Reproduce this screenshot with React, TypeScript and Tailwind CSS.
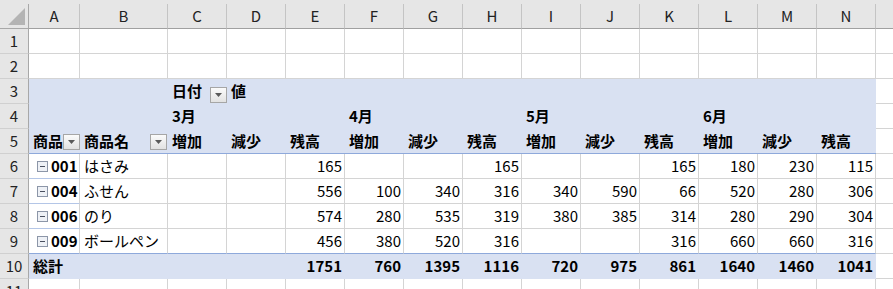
import React from 'react'

const letters = ['A', 'B', 'C', 'D', 'E', 'F', 'G', 'H', 'I', 'J', 'K', 'L', 'M', 'N']
const kinds = ['増加', '減少', '残高']
const months = ['3月', '', '', '4月', '', '', '5月', '', '', '6月', '', '']

type Item = { code: string; name: string; values: (number | null)[] }

const items: Item[] = [
  { code: '001', name: 'はさみ', values: [null, null, 165, null, null, 165, null, null, 165, 180, 230, 115] },
  { code: '004', name: 'ふせん', values: [null, null, 556, 100, 340, 316, 340, 590, 66, 520, 280, 306] },
  { code: '006', name: 'のり', values: [null, null, 574, 280, 535, 319, 380, 385, 314, 280, 290, 304] },
  { code: '009', name: 'ボールペン', values: [null, null, 456, 380, 520, 316, null, null, 316, 660, 660, 316] },
]

const totals = [null, null, 1751, 760, 1395, 1116, 720, 975, 861, 1640, 1460, 1041]

const FilterButton = () => (
  <span className="flex h-4 w-[17px] shrink-0 items-center justify-center border border-[#a6a6a6] bg-linear-to-b from-[#fbfbfb] to-[#e2e2e2]">
    <svg width="7" height="4" viewBox="0 0 7 4">
      <path d="M0 0h7L3.5 4z" fill="#5a5a5a" />
    </svg>
  </span>
)

const MinusBox = () => (
  <span className="flex h-[11px] w-[11px] shrink-0 items-center justify-center border border-[#8c96a8] bg-[#eef1f6]">
    <span className="h-px w-[5px] bg-[#4a5060]" />
  </span>
)

const RowHead = ({ n }: { n: number }) => (
  <div className="border-r border-b border-r-[#a8a8a8] border-b-[#d0d0d0] bg-[#e6e6e6] text-center leading-6 text-[#222]">
    {n}
  </div>
)

const Fill = ({ children, last }: { children?: React.ReactNode; last?: boolean }) => (
  <div className={last ? 'border-b border-b-[#8ea9db] bg-[#d9e1f2] pl-1 leading-6 font-bold' : 'bg-[#d9e1f2] pl-1 leading-6 font-bold'}>
    {children}
  </div>
)

const Blank = () => <div className="border-b border-b-[#d4d4d4] bg-white" />

const Num = ({ v, edge }: { v: number | null; edge?: boolean }) => (
  <div
    className={
      edge
        ? 'border-r border-b border-r-[#d4d4d4] border-b-[#8ea9db] bg-white pr-[2px] text-right leading-6'
        : 'border-r border-b border-[#d4d4d4] bg-white pr-[2px] text-right leading-6'
    }
  >
    {v ?? ''}
  </div>
)

export default function App() {
  return (
    <div className="h-[289px] w-[893px] overflow-hidden bg-white font-['Noto_Sans_CJK_JP',sans-serif] text-[15px] text-black">
      <div className="h-1 bg-[#e6e6e6]" />
      <div className="grid grid-cols-[29px_51px_88px_repeat(12,59px)_1fr] grid-rows-[25px_repeat(11,25px)]">
        {/* column headers */}
        <div className="relative border-r border-b border-[#a8a8a8] bg-[#e6e6e6]">
          <svg className="absolute right-[3px] bottom-[3px]" width="17" height="17" viewBox="0 0 17 17">
            <path d="M17 0V17H0z" fill="#b4b4b4" />
          </svg>
        </div>
        {letters.map((l) => (
          <div
            key={l}
            className="border-r border-b border-r-[#c4c4c4] border-b-[#a0a0a0] bg-[#e6e6e6] text-center leading-6 text-[#222]"
          >
            {l}
          </div>
        ))}
        <div className="border-b border-b-[#a0a0a0] bg-[#e6e6e6]" />

        {/* rows 1-2 */}
        {[1, 2].map((n) => (
          <React.Fragment key={n}>
            <RowHead n={n} />
            {letters.map((l) => (
              <div key={l} className="border-r border-b border-[#d4d4d4] bg-white" />
            ))}
            <Blank />
          </React.Fragment>
        ))}

        {/* row 3 */}
        <RowHead n={3} />
        <Fill />
        <Fill />
        <div className="flex items-end justify-between bg-[#d9e1f2] pb-[1px] pl-1 font-bold">
          <span className="leading-6">日付</span>
          <FilterButton />
        </div>
        <Fill>値</Fill>
        {letters.slice(4).map((l) => (
          <Fill key={l} />
        ))}
        <Blank />

        {/* row 4 */}
        <RowHead n={4} />
        <Fill />
        <Fill />
        {months.map((m, i) => (
          <Fill key={i}>{m}</Fill>
        ))}
        <Blank />

        {/* row 5 */}
        <RowHead n={5} />
        <div className="flex items-end justify-between border-b border-b-[#8ea9db] bg-[#d9e1f2] pb-[3px] pl-1 font-bold">
          <span className="-mb-[3px] leading-6">商品</span>
          <FilterButton />
        </div>
        <div className="flex items-end justify-between border-b border-b-[#8ea9db] bg-[#d9e1f2] pr-px pb-[3px] pl-1 font-bold">
          <span className="-mb-[3px] leading-6">商品名</span>
          <FilterButton />
        </div>
        {months.map((_, i) => (
          <Fill key={i} last>
            {kinds[i % 3]}
          </Fill>
        ))}
        <Blank />

        {/* data rows */}
        {items.map((it, r) => {
          const edge = r === items.length - 1
          return (
            <React.Fragment key={it.code}>
              <RowHead n={r + 6} />
              <div
                className={
                  edge
                    ? 'flex items-center gap-[3px] border-r border-b border-r-[#d4d4d4] border-b-[#8ea9db] bg-white pl-2'
                    : 'flex items-center gap-[3px] border-r border-b border-r-[#d4d4d4] border-b-[#b4c6e7] bg-white pl-2'
                }
              >
                <MinusBox />
                <span className="leading-6 font-bold">{it.code}</span>
              </div>
              <div
                className={
                  edge
                    ? 'border-r border-b border-r-[#d4d4d4] border-b-[#8ea9db] bg-white pl-1 leading-6'
                    : 'border-r border-b border-[#d4d4d4] bg-white pl-1 leading-6'
                }
              >
                {it.name}
              </div>
              {it.values.map((v, i) => (
                <Num key={i} v={v} edge={edge} />
              ))}
              <Blank />
            </React.Fragment>
          )
        })}

        {/* row 10 totals */}
        <RowHead n={10} />
        <div className="bg-[#d9e1f2] pl-1 leading-6 font-bold">総計</div>
        <div className="bg-[#d9e1f2]" />
        {totals.map((v, i) => (
          <div key={i} className="bg-[#d9e1f2] pr-[3px] text-right leading-6 font-bold">
            {v ?? ''}
          </div>
        ))}
        <Blank />

        {/* row 11 */}
        <RowHead n={11} />
        {letters.map((l) => (
          <div key={l} className="border-r border-b border-[#d4d4d4] bg-white" />
        ))}
        <Blank />
      </div>
    </div>
  )
}
